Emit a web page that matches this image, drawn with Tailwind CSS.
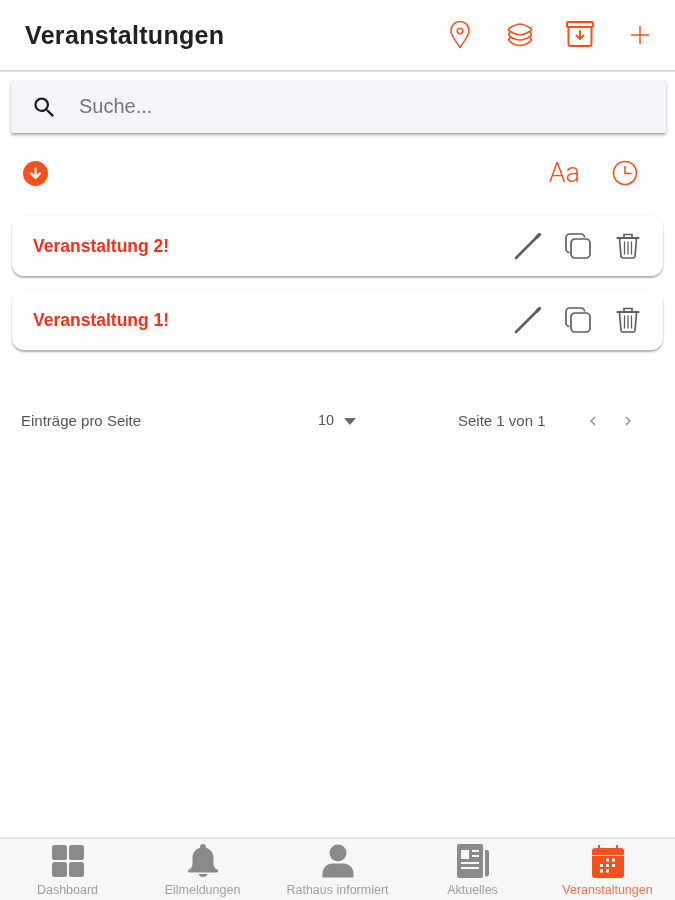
<!DOCTYPE html>
<html>
<head>
<title>Veranstaltungen</title>
<meta charset="UTF-8">
<meta name="viewport" content="width=device-width, initial-scale=1.0">
<script src="https://cdn.jsdelivr.net/npm/@tailwindcss/browser@4"></script>
</head>
<body class="bg-white font-['Liberation_Sans',sans-serif]">
<div class="flex flex-col h-[900px] w-[675px] overflow-hidden blur-[0.5px]">

  <!-- header -->
  <header class="h-[72px] shrink-0 flex items-center justify-between pt-[2px] pl-[25px] pr-[21px] border-b-2 border-[#dcdcdc]">
    <h1 class="text-[25px] font-bold tracking-[0.33px] text-[#212121]">Veranstaltungen</h1>
    <div class="flex items-center gap-[32px] pb-[2px] text-[#f4511e]">
      <svg class="w-[28px] h-[28px]" viewBox="0 0 28 28" fill="none" stroke="currentColor" stroke-width="1.500"><path d="M14 26.500C10 20 5 15 5 9.500a9 9 0 0 1 18 0C23 15 18 20 14 26.500z" stroke-linejoin="round"/><circle cx="14" cy="10" r="2.800"/></svg>
      <svg class="w-[28px] h-[28px]" viewBox="0 0 28 28" fill="none" stroke="currentColor" stroke-width="1.700" stroke-linejoin="round"><path d="M14 3C18 3 21 5 24.500 7Q26.500 8.500 24.500 10C21 12 18 14 14 14C10 14 7 12 3.500 10Q1.500 8.500 3.500 7C7 5 10 3 14 3z"/><path d="M4.500 11Q1.500 13 3.500 14.800C7 17.500 10 19 14 19C18 19 21 17.500 24.500 14.800Q26.500 13 23.500 11"/><path d="M4.500 16.500Q1.500 18.500 3.500 20.300C7 23 10 24.500 14 24.500C18 24.500 21 23 24.500 20.300Q26.500 18.500 23.500 16.500"/></svg>
      <svg class="w-[28px] h-[28px]" viewBox="0 0 28 28" fill="none" stroke="currentColor" stroke-width="2" stroke-linejoin="round" stroke-linecap="round"><rect x="1" y="1" width="26" height="5" rx="1"/><path d="M2.500 6v17a2 2 0 0 0 2 2h19a2 2 0 0 0 2-2V6"/><path d="M14 10v8M10.500 14.500L14 18l3.500-3.500"/></svg>
      <svg class="w-[28px] h-[28px]" viewBox="0 0 28 28" fill="none" stroke="currentColor" stroke-width="1.500"><path d="M14 5v18M5 14h18"/></svg>
    </div>
  </header>

  <!-- search -->
  <div class="ml-[11px] mr-[9px] mt-[8px] h-[53px] shrink-0 flex items-center bg-[#f3f5f9] rounded-[2px] shadow-[0_2px_3px_rgba(0,0,0,0.35)]">
    <svg class="ml-[20px] mt-[2px] w-[27px] h-[27px] text-[#1a1a1a]" viewBox="0 0 24 24" fill="currentColor"><path d="M15.500 14h-.79l-.28-.27A6.470 6.470 0 0 0 16 9.500 6.500 6.500 0 1 0 9.500 16c1.610 0 3.090-.59 4.230-1.570l.27.28v.79l5 4.990L20.490 19l-4.990-5zm-6 0C7.010 14 5 11.990 5 9.500S7.010 5 9.500 5 14 7.010 14 9.500 11.990 14 9.500 14z"/></svg>
    <span class="ml-[21px] pb-[2px] text-[20px] text-[#757575]">Suche...</span>
  </div>

  <!-- sort row -->
  <div class="h-[28px] mt-[26px] shrink-0 flex items-center justify-between pl-[23px] pr-[37px]">
    <span class="w-[25px] h-[25px] rounded-full bg-[#f4511e] flex items-center justify-center">
      <svg class="w-[15px] h-[15px] text-white" viewBox="0 0 24 24" fill="none" stroke="currentColor" stroke-width="3.500" stroke-linecap="round" stroke-linejoin="round"><path d="M12 4v15M5 12l7 7 7-7"/></svg>
    </span>
    <div class="flex items-center gap-[32px] text-[#f4511e]">
      <span class="font-['Roboto',sans-serif] font-light text-[27px] leading-none">Aa</span>
      <svg class="w-[26px] h-[26px]" viewBox="0 0 26 26" fill="none" stroke="currentColor" stroke-width="1.600"><circle cx="13" cy="13" r="11.500"/><path d="M13 6v7.500h6.500"/></svg>
    </div>
  </div>

  <!-- list -->
  <div class="mt-[29px] mx-[12px] flex flex-col gap-[14px] shrink-0">
    <div class="h-[60px] flex items-center justify-between pl-[21px] pr-[23px] bg-white rounded-[12px] shadow-[0_2px_2px_rgba(0,0,0,0.3),0_0_3px_rgba(0,0,0,0.06)]">
      <span class="text-[17.500px] font-bold text-[#f4301e]">Veranstaltung 2!</span>
      <div class="flex items-center text-[#5f5f5f]">
        <svg class="w-[28px] h-[28px]" viewBox="0 0 28 28" fill="none" stroke="currentColor" stroke-linecap="round"><path d="M3 26L24 5" stroke-width="2.600"/><path d="M24 5l2.500-2.500" stroke-width="3.200"/></svg>
        <svg class="ml-[23px] w-[28px] h-[28px]" viewBox="0 0 28 28" fill="none" stroke="currentColor" stroke-width="1.700"><path d="M5.500 20.500A3.500 3.500 0 0 1 2 17V5.500A3.500 3.500 0 0 1 5.500 2H17a3.500 3.500 0 0 1 3.500 3.500"/><rect x="7" y="7" width="19" height="19" rx="4"/></svg>
        <svg class="ml-[24px] w-[24px] h-[28px]" viewBox="0 0 24 28" fill="none" stroke="currentColor" stroke-width="1.700" stroke-linecap="round"><path d="M1.500 6h21" stroke-width="2"/><path d="M8 5.500V2.500h8v3"/><path d="M3.500 6.500l1.500 18a2 2 0 0 0 2 1.500h10a2 2 0 0 0 2-1.500l1.500-18"/><path d="M8.500 10v12M12 10v12M15.500 10v12" stroke-width="1.300"/></svg>
      </div>
    </div>
    <div class="h-[60px] flex items-center justify-between pl-[21px] pr-[23px] bg-white rounded-[12px] shadow-[0_2px_2px_rgba(0,0,0,0.3),0_0_3px_rgba(0,0,0,0.06)]">
      <span class="text-[17.500px] font-bold text-[#f4301e]">Veranstaltung 1!</span>
      <div class="flex items-center text-[#5f5f5f]">
        <svg class="w-[28px] h-[28px]" viewBox="0 0 28 28" fill="none" stroke="currentColor" stroke-linecap="round"><path d="M3 26L24 5" stroke-width="2.600"/><path d="M24 5l2.500-2.500" stroke-width="3.200"/></svg>
        <svg class="ml-[23px] w-[28px] h-[28px]" viewBox="0 0 28 28" fill="none" stroke="currentColor" stroke-width="1.700"><path d="M5.500 20.500A3.500 3.500 0 0 1 2 17V5.500A3.500 3.500 0 0 1 5.500 2H17a3.500 3.500 0 0 1 3.500 3.500"/><rect x="7" y="7" width="19" height="19" rx="4"/></svg>
        <svg class="ml-[24px] w-[24px] h-[28px]" viewBox="0 0 24 28" fill="none" stroke="currentColor" stroke-width="1.700" stroke-linecap="round"><path d="M1.500 6h21" stroke-width="2"/><path d="M8 5.500V2.500h8v3"/><path d="M3.500 6.500l1.500 18a2 2 0 0 0 2 1.500h10a2 2 0 0 0 2-1.500l1.500-18"/><path d="M8.500 10v12M12 10v12M15.500 10v12" stroke-width="1.300"/></svg>
      </div>
    </div>
  </div>

  <!-- pagination -->
  <div class="mt-[60px] h-[22px] shrink-0 flex items-center pl-[21px] text-[15px] text-[#555555]">
    <span class="w-[297px]">Einträge pro Seite</span>
    <span class="w-[26px] text-[14.500px]">10</span>
    <svg class="w-[12px] h-[7px] text-[#6b6b6b]" viewBox="0 0 12 7" fill="currentColor"><path d="M0 0h12L6 7z"/></svg>
    <span class="ml-[102px] w-[131px]">Seite 1 von 1</span>
    <svg class="w-[8px] h-[12px] text-[#888888]" viewBox="0 0 8 12" fill="none" stroke="currentColor" stroke-width="1.300"><path d="M6 2L2 6l4 4"/></svg>
    <svg class="ml-[27px] w-[8px] h-[12px] text-[#888888]" viewBox="0 0 8 12" fill="none" stroke="currentColor" stroke-width="1.300"><path d="M2 2l4 4-4 4"/></svg>
  </div>

  <!-- bottom nav -->
  <nav class="mt-auto h-[63px] shrink-0 grid grid-cols-5 bg-[#f7f7f7] border-t-2 border-[#e6e6e6] text-[#a0a0a0] text-[12.500px]">
    <div class="flex flex-col items-center pt-[5px]">
      <svg class="w-[34px] h-[34px] text-[#8a8a8a]" viewBox="0 0 34 34" fill="currentColor"><rect x="1" y="1" width="15" height="15" rx="2.500"/><rect x="18" y="1" width="15" height="15" rx="2.500"/><rect x="1" y="18" width="15" height="15" rx="2.500"/><rect x="18" y="18" width="15" height="15" rx="2.500"/></svg>
      <span class="mt-[5px] leading-[14px]">Dashboard</span>
    </div>
    <div class="flex flex-col items-center pt-[5px]">
      <svg class="w-[34px] h-[34px] text-[#8a8a8a]" viewBox="0 0 34 34" fill="currentColor"><path d="M17 0a3 3 0 0 1 3 3v.8C25 5.200 27.500 9.500 27.500 14v6c0 2.500 1.500 4.500 4 6 1.200.8.600 2.500-1 2.500h-27c-1.600 0-2.200-1.700-1-2.500 2.500-1.500 4-3.500 4-6v-6c0-4.500 2.500-8.800 7.500-10.200V3a3 3 0 0 1 3-3z"/><path d="M12.500 30h9c-.5 2-2.300 3-4.500 3s-4-1-4.500-3z"/></svg>
      <span class="mt-[5px] leading-[14px]">Eilmeldungen</span>
    </div>
    <div class="flex flex-col items-center pt-[5px]">
      <svg class="w-[34px] h-[34px] text-[#8a8a8a]" viewBox="0 0 34 34" fill="currentColor"><circle cx="17" cy="9" r="8.500"/><path d="M1.500 33.500v-4c0-6 5-10 10-10h11c5 0 10 4 10 10v4z"/></svg>
      <span class="mt-[5px] leading-[14px]">Rathaus informiert</span>
    </div>
    <div class="flex flex-col items-center pt-[5px]">
      <svg class="w-[34px] h-[34px] text-[#8a8a8a]" viewBox="0 0 34 34"><path fill="currentColor" fill-rule="evenodd" d="M3 0h22a2 2 0 0 1 2 2v30a2 2 0 0 1-2 2H3a2 2 0 0 1-2-2V2a2 2 0 0 1 2-2zM5 6v9h8V6zm11 0v2h7V6zm0 5v2h7v-2zM5 18v2h18v-2zm0 5v2h18v-2z"/><path fill="currentColor" d="M29 6h2a2 2 0 0 1 2 2v22a2.500 2.500 0 0 1-4 2z"/></svg>
      <span class="mt-[5px] leading-[14px]">Aktuelles</span>
    </div>
    <div class="flex flex-col items-center pt-[5px]">
      <svg class="w-[34px] h-[34px] text-[#f4511e]" viewBox="0 0 34 34"><path fill="currentColor" d="M7 1h2v3h16V1h2v3h3a3 3 0 0 1 3 3v4H1V7a3 3 0 0 1 3-3h3z"/><path fill="currentColor" d="M1 12h32v19a3 3 0 0 1-3 3H4a3 3 0 0 1-3-3z"/><g fill="#ffffff"><rect x="15" y="14.500" width="3" height="3"/><rect x="21" y="14.500" width="3" height="3"/><rect x="9" y="20" width="3" height="3"/><rect x="15" y="20" width="3" height="3"/><rect x="21" y="20" width="3" height="3"/><rect x="9" y="25.500" width="3" height="3"/><rect x="15" y="25.500" width="3" height="3"/></g></svg>
      <span class="mt-[5px] leading-[14px] text-[#f4704a]">Veranstaltungen</span>
    </div>
  </nav>
</div>
</body>
</html>
